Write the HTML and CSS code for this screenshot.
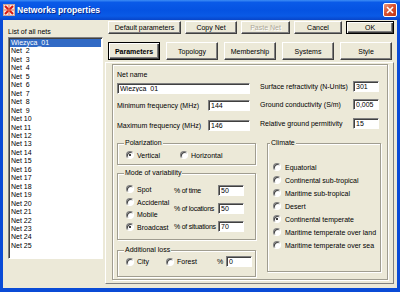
FILE: index.html
```html
<!DOCTYPE html>
<html lang="en">
<head>
    <meta charset="UTF-8">
    <title>Networks properties</title>
    <link rel="stylesheet" href="styles.css">
</head>
<body>

<div class="window">
    <div class="titlebar">
        <svg class="app-icon" width="12" height="12" viewBox="0 0 12 12">
            <rect x="0.5" y="0.5" width="11" height="11" fill="#f7e4dc" stroke="#c9a79c"/>
            <path d="M2 2 L10 10 M10 2 L2 10" stroke="#d8180f" stroke-width="2"/>
            <path d="M6 1 V11 M1 6 H11" stroke="#e86a50" stroke-width="1"/>
        </svg>
        <span class="title">Networks properties</span>
        <span class="close-btn">
            <svg width="8" height="8" viewBox="0 0 8 8"><path d="M1 1 L7 7 M7 1 L1 7" stroke="#fff" stroke-width="1.6"/></svg>
        </span>
    </div>

    <div class="client">
        <!-- list of nets -->
        <div class="nets-column">
            <div class="nets-label">List of all nets</div>
            <div class="listbox">
                <div class="item selected">Wiezyca_01</div>
                <div class="item">Net  2</div>
                <div class="item">Net  3</div>
                <div class="item">Net  4</div>
                <div class="item">Net  5</div>
                <div class="item">Net  6</div>
                <div class="item">Net  7</div>
                <div class="item">Net  8</div>
                <div class="item">Net  9</div>
                <div class="item">Net 10</div>
                <div class="item">Net 11</div>
                <div class="item">Net 12</div>
                <div class="item">Net 13</div>
                <div class="item">Net 14</div>
                <div class="item">Net 15</div>
                <div class="item">Net 16</div>
                <div class="item">Net 17</div>
                <div class="item">Net 18</div>
                <div class="item">Net 19</div>
                <div class="item">Net 20</div>
                <div class="item">Net 21</div>
                <div class="item">Net 22</div>
                <div class="item">Net 23</div>
                <div class="item">Net 24</div>
                <div class="item">Net 25</div>
            </div>
        </div>

        <div class="main-column">
            <div class="action-buttons">
                <button class="btn btn-defaults">Default parameters</button>
                <button class="btn btn-copy">Copy Net</button>
                <button class="btn btn-paste" disabled>Paste Net</button>
                <button class="btn btn-cancel">Cancel</button>
                <button class="btn btn-ok default">OK</button>
            </div>

            <div class="tabs">
                <button class="btn tab default active">Parameters</button>
                <button class="btn tab">Topology</button>
                <button class="btn tab">Membership</button>
                <button class="btn tab">Systems</button>
                <button class="btn tab">Style</button>
            </div>

            <div class="panel">
                <div class="frame">
                    <div class="top-fields">
                        <div class="left-fields">
                            <div class="field-label">Net name</div>
                            <input class="edit net-name" type="text" value="Wiezyca_01">
                            <div class="field-row row-min">
                                <span class="row-label">Minimum frequency (MHz)</span>
                                <input class="edit freq" type="text" value="144">
                            </div>
                            <div class="field-row row-max">
                                <span class="row-label">Maximum frequency (MHz)</span>
                                <input class="edit freq" type="text" value="146">
                            </div>
                        </div>
                        <div class="right-fields">
                            <div class="field-row row-surface">
                                <span class="row-label">Surface refractivity (N-Units)</span>
                                <input class="edit small" type="text" value="301">
                            </div>
                            <div class="field-row row-ground">
                                <span class="row-label">Ground conductivity (S/m)</span>
                                <input class="edit small" type="text" value="0,005">
                            </div>
                            <div class="field-row row-relative">
                                <span class="row-label">Relative ground permitivity</span>
                                <input class="edit small" type="text" value="15">
                            </div>
                        </div>
                    </div>

                    <div class="bottom-groups">
                        <div class="left-groups">
                            <fieldset class="group">
                                <legend>Polarization</legend>
                                <div class="polar-body">
                                    <span class="option opt-vertical"><span class="radio checked"></span>Vertical</span>
                                    <span class="option"><span class="radio"></span>Horizontal</span>
                                </div>
                            </fieldset>

                            <fieldset class="group mode">
                                <legend>Mode of variability</legend>
                                <div class="mode-body">
                                    <div class="mode-options">
                                        <span class="option"><span class="radio"></span>Spot</span>
                                        <span class="option"><span class="radio"></span>Accidental</span>
                                        <span class="option"><span class="radio"></span>Mobile</span>
                                        <span class="option"><span class="radio checked"></span>Broadcast</span>
                                    </div>
                                    <div class="mode-fields">
                                        <div class="field-row"><span class="pct-label">% of time</span><input class="edit pct" type="text" value="50"></div>
                                        <div class="field-row"><span class="pct-label">% of locations</span><input class="edit pct" type="text" value="50"></div>
                                        <div class="field-row"><span class="pct-label">% of situations</span><input class="edit pct" type="text" value="70"></div>
                                    </div>
                                </div>
                            </fieldset>

                            <fieldset class="group loss">
                                <legend>Additional loss</legend>
                                <div class="loss-body">
                                    <span class="option opt-city"><span class="radio"></span>City</span>
                                    <span class="option opt-forest"><span class="radio"></span>Forest</span>
                                    <span class="pct-sign">%</span>
                                    <input class="edit pct" type="text" value="0">
                                </div>
                            </fieldset>
                        </div>

                        <fieldset class="group climate">
                            <legend>Climate</legend>
                            <div class="climate-body">
                                <span class="option"><span class="radio"></span>Equatorial</span>
                                <span class="option"><span class="radio"></span>Continental sub-tropical</span>
                                <span class="option"><span class="radio"></span>Maritime sub-tropical</span>
                                <span class="option"><span class="radio"></span>Desert</span>
                                <span class="option"><span class="radio checked"></span>Continental temperate</span>
                                <span class="option"><span class="radio"></span>Maritime temperate over land</span>
                                <span class="option"><span class="radio"></span>Maritime temperate over sea</span>
                            </div>
                        </fieldset>
                    </div>
                </div>
            </div>
        </div>
    </div>
</div>

</body>
</html>
```

FILE: styles.css
```css
* {
    box-sizing: border-box;
}

body {
    margin: 0;
    font-family: "Liberation Sans", Arial, sans-serif;
    font-size: 7px;
    color: #000;
}

.window {
    width: 400px;
    height: 292px;
    display: flex;
    flex-direction: column;
    background-color: #0a4bd6;
}

/* title bar */
.titlebar {
    height: 20px;
    display: flex;
    align-items: center;
    padding: 0 3px;
    background: linear-gradient(to bottom, #3d8df5 0%, #0a5ae8 12%, #0553e2 50%, #0a5ae6 80%, #0845c9 100%);
    color: #fff;
}

.app-icon {
    margin-right: 2px;
}

.title {
    flex: 1;
    font-size: 8.6px;
    font-weight: bold;
    text-shadow: 1px 1px 0 #0a2a8a;
}

.close-btn {
    width: 14px;
    height: 14px;
    display: flex;
    align-items: center;
    justify-content: center;
    border: 1px solid #fff;
    border-radius: 2px;
    background: linear-gradient(135deg, #ec9a80 0%, #da5230 45%, #bd3512 100%);
}

/* client area */
.client {
    flex: 1;
    display: flex;
    margin: 0 3px 4px 3px;
    background-color: #ece9d8;
}

.nets-column {
    width: 100px;
    padding-left: 5px;
}

.nets-label {
    margin-top: 8px;
    line-height: 8px;
}

.listbox {
    width: 95px;
    height: 222px;
    margin-top: 1px;
    padding: 1px;
    background-color: #fff;
    border: 1px solid;
    border-color: #808080 #fff #fff #808080;
    box-shadow: inset 1px 1px 0 #404040;
}

.item {
    height: 8.46px;
    line-height: 8px;
    padding-left: 1px;
    white-space: pre;
}

.item.selected {
    background-color: #316ac5;
    color: #fff;
}

.main-column {
    width: 290px;
    margin-left: 2px;
}

/* buttons */
.btn {
    padding: 0;
    font-family: inherit;
    font-size: 7px;
    color: #000;
    background-color: #ece9d8;
    border: 1px solid;
    border-color: #fff #404040 #404040 #fff;
    box-shadow: inset -1px -1px 0 #808080;
}

.btn.default {
    border: 1px solid #000;
    box-shadow: inset 1px 1px 0 #fff, inset -1px -1px 0 #404040, inset -2px -2px 0 #808080;
}

.btn:disabled {
    color: #aca899;
    text-shadow: 1px 1px 0 #fff;
}

.action-buttons {
    display: flex;
    gap: 4px;
    height: 13px;
    margin-top: 1px;
    padding-left: 3px;
}

.btn-defaults { width: 73px; }
.btn-copy { width: 52px; }
.btn-paste { width: 49px; }
.btn-cancel { width: 48px; }
.btn-ok { width: 48px; }

.tabs {
    display: flex;
    gap: 6px;
    height: 18px;
    margin-top: 8px;
    padding-left: 3px;
}

.tab {
    width: 52px;
}

.tab.active {
    font-weight: bold;
}

/* parameters page */
.panel {
    width: 289px;
    height: 222px;
    margin-top: 2px;
    padding: 1px 5px 3px 6px;
    border: 1px solid;
    border-color: #fff #808080 #808080 #fff;
}

.frame {
    height: 100%;
    padding-left: 4px;
    border: 1px solid #a09d90;
    box-shadow: inset 1px 1px 0 #fff, 1px 1px 0 #fff;
}

.edit {
    height: 11px;
    padding: 0 2px;
    font-family: inherit;
    font-size: 7px;
    line-height: 8px;
    color: #000;
    background-color: #fff;
    border: 1px solid;
    border-color: #808080 #fff #fff #808080;
    box-shadow: inset 1px 1px 0 #404040;
    outline: none;
}

.top-fields {
    display: flex;
}

.left-fields {
    width: 133px;
}

.field-label {
    margin-top: 6px;
    line-height: 8px;
}

.net-name {
    display: block;
    width: 133px;
    margin-top: 4px;
}

.field-row {
    display: flex;
    align-items: center;
}

.row-min { margin-top: 6px; }
.row-max { margin-top: 9px; }

.left-fields .row-label {
    width: 91px;
}

.freq {
    width: 42px;
}

.right-fields {
    width: 119px;
    margin-left: 10px;
}

.right-fields .row-label {
    width: 93px;
}

.small {
    width: 26px;
}

.row-surface { margin-top: 16px; }
.row-ground { margin-top: 7px; }
.row-relative { margin-top: 8px; }

/* group boxes */
.bottom-groups {
    display: flex;
    margin-top: 8px;
}

.left-groups {
    width: 139px;
}

.group {
    margin: 0;
    padding: 0;
    min-width: 0;
    border: 1px solid #a09d90;
    box-shadow: inset 1px 1px 0 #fff, 1px 1px 0 #fff;
}

.group legend {
    margin-left: 6px;
    padding: 0 1px;
    line-height: 8px;
    background-color: #ece9d8;
}

.option {
    display: flex;
    align-items: center;
    gap: 3px;
    white-space: nowrap;
}

.radio {
    position: relative;
    width: 8px;
    height: 8px;
    flex-shrink: 0;
    border-radius: 50%;
    background-color: #fff;
    border: 1px solid;
    border-color: #808080 #fff #fff #808080;
    box-shadow: inset 1px 1px 0 #404040;
}

.radio.checked::after {
    content: "";
    position: absolute;
    left: 2px;
    top: 2px;
    width: 2px;
    height: 2px;
    border-radius: 50%;
    background-color: #000;
}

.polar-body {
    display: flex;
    align-items: center;
    height: 17px;
    padding: 4px 0 5px 8px;
}

.opt-vertical {
    width: 54px;
}

.mode {
    margin-top: 4px;
}

.mode-body {
    display: flex;
    height: 62px;
}

.mode-options {
    width: 56px;
    padding: 6px 0 0 8px;
}

.mode-options .option {
    height: 12.7px;
}

.mode-fields {
    display: flex;
    flex-direction: column;
    gap: 7px;
    padding-top: 8px;
}

.pct-label {
    width: 44px;
    white-space: nowrap;
    letter-spacing: -0.25px;
}

.pct {
    width: 26px;
}

.loss {
    margin-top: 6px;
}

.loss-body {
    display: flex;
    align-items: center;
    height: 22px;
    padding: 2px 0 9px 8px;
}

.opt-city { width: 40px; }
.opt-forest { width: 51px; }

.pct-sign {
    width: 9px;
}

.climate {
    width: 114px;
    height: 133px;
    margin-left: 11px;
}

.climate legend {
    margin-left: 2px;
}

.climate-body {
    padding: 13.5px 0 0 5px;
}

.climate-body .option {
    height: 13px;
    gap: 4px;
}
```
